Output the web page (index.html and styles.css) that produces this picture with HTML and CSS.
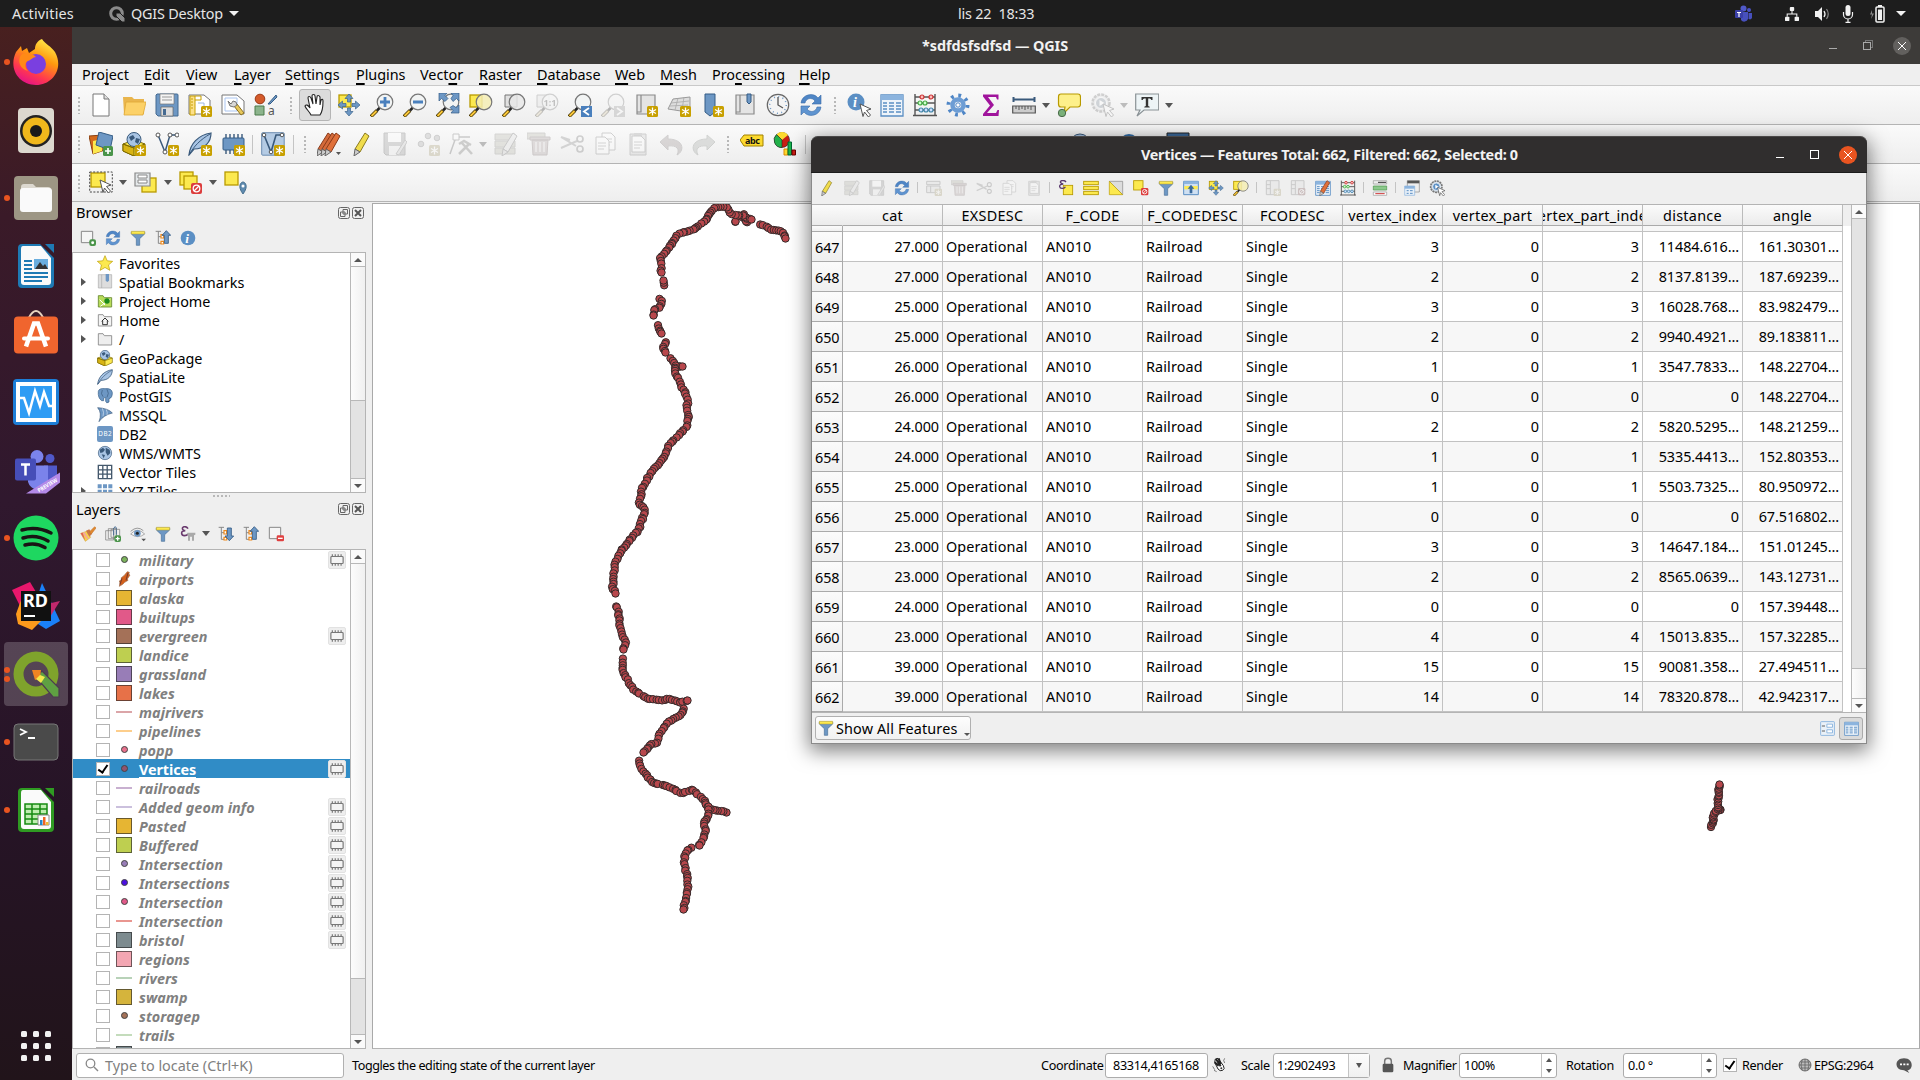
FILE: index.html
```html
<!DOCTYPE html>
<html lang="en">
<head>
<meta charset="utf-8">
<title>QGIS Desktop</title>
<link rel="stylesheet" href="styles.css">
</head>
<body>
<div class="desktop">
  <header class="topbar">
    <span class="activities">Activities</span>
    <svg class="q-mini" viewBox="0 0 16 16"><circle cx="7.5" cy="7.5" r="5.8" fill="none" stroke="#8b8b8b" stroke-width="3"/><path d="M7 7h4l5 5v4h-3L7 10z" fill="#8b8b8b" stroke="#1d1d1d"/></svg>
    <span class="appname">QGIS Desktop</span><i class="tri light"></i>
    <span class="clock">lis 22&nbsp; 18:33</span>
    <div class="tray">
      <svg class="t-teams" viewBox="0 0 18 18"><circle cx="9.500" cy="3.500" r="3" fill="#5059c9"/><circle cx="15" cy="5" r="2" fill="#4a52c4"/><path d="M7 7h7v7a4 4 0 0 1-7 1zM14.500 8H18v5a2.500 2.500 0 0 1-3.500 1z" fill="#4750bd"/><rect x="1" y="5" width="8" height="8" rx="1" fill="#3a3fa6"/><path d="M3 7.500h4M5 7.500V12" stroke="#fff" stroke-width="1.200"/></svg>
      <svg class="t-net" viewBox="0 0 16 16" fill="#f2f2f2"><rect x="5.500" y="0" width="5" height="4.500" rx="1"/><rect x="0" y="11" width="5" height="5" rx="1"/><rect x="11" y="11" width="5" height="5" rx="1"/><path d="M8 4v4M2.500 11V8h11v3" stroke="#f2f2f2" stroke-width="1.200" fill="none"/></svg>
      <svg class="t-vol" viewBox="0 0 16 16" fill="#f2f2f2"><path d="M1 5h3l4-4v14l-4-4H1z"/><path d="M10 5q2 3 0 6" stroke="#f2f2f2" fill="none" stroke-width="1.300"/><path d="M12.500 3q3.500 5 0 10" stroke="#888" fill="none" stroke-width="1.200"/></svg>
      <svg class="t-mic" viewBox="0 0 12 18" fill="#f2f2f2"><rect x="3.500" y="0" width="5" height="11" rx="2.500"/><path d="M1.500 7v2.500a4.500 4.500 0 0 0 9 0V7M6 14v3M3.500 17.300h5" fill="none" stroke="#f2f2f2" stroke-width="1.200"/></svg>
      <svg class="t-bat" viewBox="0 0 16 18"><path d="M3 5L1 9.500h2L2 14l3-5.500H3z" fill="#888"/><rect x="7" y="2" width="8" height="15" rx="1" fill="none" stroke="#f2f2f2" stroke-width="1.500"/><rect x="9" y="0" width="4" height="2" fill="#f2f2f2"/><rect x="9" y="4.500" width="4" height="10.500" fill="#f2f2f2"/></svg>
      <i class="tri light"></i>
    </div>
  </header>
  <div class="below">
    <nav class="dock" id="dock"></nav>
    <main class="app">
      <div class="titlebar"><span>*sdfdsfsdfsd — QGIS</span>
        <div class="wm dim"><i class="min"></i><i class="restore"></i><i class="close"></i></div>
      </div>
      <div class="menubar">
        <span class="m1">Pro<u>j</u>ect</span><span class="m2"><u>E</u>dit</span><span class="m3"><u>V</u>iew</span><span class="m4"><u>L</u>ayer</span><span class="m5"><u>S</u>ettings</span><span class="m6"><u>P</u>lugins</span><span class="m7">Vect<u>o</u>r</span><span class="m8"><u>R</u>aster</span><span class="m9"><u>D</u>atabase</span><span class="m10"><u>W</u>eb</span><span class="m11"><u>M</u>esh</span><span class="m12">Pro<u>c</u>essing</span><span><u>H</u>elp</span>
      </div>
      <div class="toolbar" data-items="| new open save layout layoutmgr style |w hand* panSel zoomIn zoomOut zoomFull zoomSel zoomLayer zoomNative~ zoomLast zoomNext~ newMap newMesh newBm showBm clock refresh |g info attr abacus gear sigma ruler v tip action~ v~ textNote v"></div>
      <div class="toolbar" data-items="| addLayer geopkg vlayer feather chip s shape S |h pencils pencil saveEdit~ addPt~ vertex~ v~ multi~ trash~ cut~ copy~ paste~ undo~ redo~ |g label diagram S gap globe gapS blueDot gapS dbDark"></div>
      <div class="toolbar last" data-items="| selRect v selForm v deselect v selLoc"></div>
      <div class="work">
        <aside class="panels">
          <div class="ptitle"><span>Browser</span><i class="pbtn" data-icon="float"></i><i class="pbtn" data-icon="pclose"></i></div>
          <div class="ptools" data-items="addBox refresh filter collapse infoS"></div>
          <div class="listbox browser"><div class="rows" id="browser"></div>
            <div class="sb"><b class="up"></b><div class="handle"></div><b class="dn"></b></div></div>
          <div class="split"></div>
          <div class="ptitle second"><span>Layers</span><i class="pbtn" data-icon="float"></i><i class="pbtn" data-icon="pclose"></i></div>
          <div class="ptools lower" data-items="brush addGroup eye filter epsilon v expand collapse removeBox"></div>
          <div class="listbox layers"><div class="rows" id="layers"></div>
            <div class="sb"><b class="up"></b><div class="handle"></div><b class="dn"></b></div></div>
        </aside>
        <div class="vsplit"></div>
        <section class="canvas"><svg id="map" viewBox="373 204 1546 844"></svg></section>
      </div>
      <footer class="status">
        <div class="locate"><svg viewBox="0 0 14 14"><circle cx="5.500" cy="5.500" r="4.300" fill="none" stroke="#888" stroke-width="1.300"/><path d="M9 9l4 4" stroke="#888" stroke-width="1.500"/></svg><span>Type to locate (Ctrl+K)</span></div>
        <span class="msg">Toggles the editing state of the current layer</span>
        <span class="l-co">Coordinate</span><div class="field f-co"><span>83314,4165168</span></div>
        <i class="ic16 mouse" data-icon="mouse"></i>
        <span class="l-sc">Scale</span><div class="field f-sc"><span>1:2902493</span><div class="drop"><i class="tri sm"></i></div></div>
        <i class="ic16 lock" data-icon="lock"></i>
        <span class="l-mg">Magnifier</span><div class="field f-mg"><span>100%</span><div class="spin"><b></b><i></i></div></div>
        <span class="l-ro">Rotation</span><div class="field f-ro"><span>0.0 °</span><div class="spin"><b></b><i></i></div></div>
        <i class="check on st"></i><span class="l-re">Render</span>
        <i class="ic16 crs" data-icon="crs"></i><span class="l-ep">EPSG:2964</span>
        <i class="ic16 bubble" data-icon="bubble"></i>
      </footer>
    </main>
  </div>
  <section class="window">
    <div class="wtitle"><span>Vertices — Features Total: 662, Filtered: 662, Selected: 0</span>
      <div class="wm"><i class="min"></i><i class="max"></i><i class="close"></i></div></div>
    <div class="wtools" data-items="pencil multi~ saveEdit~ refresh s addRow~ trash~ cut~ copy~ paste~ s selExpr selAll invert deselOne filter moveTop panSel zoomSel s newField~ delField~ editField abacus s cond s dock action"></div>
    <div class="tablewrap"><div class="table" id="table"></div>
      <div class="sb"><b class="up"></b><div class="trough"></div><div class="handle"></div><b class="dn"></b></div></div>
    <div class="wfoot"><div class="showall"><i data-icon="filter"></i><span>Show All Features</span><em></em></div>
      <i class="fbtn" data-icon="formView"></i><i class="fbtn active" data-icon="attr"></i></div>
  </section>
</div>
<script src="app.js"></script>
</body>
</html>
```
FILE: styles.css
```css
*{box-sizing:border-box}
body{margin:0;width:1920px;height:1080px;overflow:hidden;font:14.4px/19px "Noto Sans","Open Sans",sans-serif;color:#000}
i,em,b{font-style:normal;font-weight:400}
svg{display:block}
.desktop{position:relative;width:1920px;height:1080px;display:flex;flex-direction:column;overflow:hidden}
.topbar{height:27px;background:#1d1d1d;color:#e6e6e6;display:flex;align-items:center;flex:none}
.activities{margin-left:12px;width:97px;letter-spacing:.2px}
.q-mini{width:16px;height:16px;margin-right:6px}
.appname{width:92px;letter-spacing:-.2px;white-space:nowrap}
.tri{width:0;height:0;border:4px solid transparent;border-top:5px solid #555;border-bottom:0;flex:none}
.tri.light{border-width:5px;border-top-color:#f2f2f2;border-bottom:0;margin-left:6px}
.tri.sm{border-width:3.5px;border-top-width:5px;border-bottom:0}
.clock{margin-left:719px;width:90px;white-space:nowrap;letter-spacing:-.2px}
.tray{display:flex;align-items:center;margin-left:686px}
.t-teams{width:18px;height:18px;margin-right:32px}
.t-net{width:16px;height:14px;margin-right:14px}
.t-vol{width:16px;height:16px;margin-right:12px}
.t-mic{width:12px;height:18px;margin-right:15px}
.t-bat{width:16px;height:18px;margin-right:5px}
.below{flex:1;display:flex;min-height:0}
.dock{width:72px;background:linear-gradient(#48201f 0,#3a1a28 18%,#30182e 45%,#261426 75%,#21141a 100%);display:flex;flex-direction:column;padding-top:1px}
.dock .cell{height:68px;display:flex;align-items:center;justify-content:center;position:relative;flex:none}
.dock .cell.active:before{content:"";position:absolute;inset:2px 4px;background:rgba(255,255,255,.2);border-radius:4px}
.dock svg{width:48px;height:48px;position:relative}
.dock .dots{position:absolute;left:4px;top:0;height:68px;display:flex;flex-direction:column;justify-content:center;gap:3px}
.dock .dots b{width:6px;height:6px;border-radius:50%;background:#e95420}
.dock .apps{margin-top:auto;height:68px;display:flex;align-items:center;justify-content:center}
.dock .apps svg{width:30px;height:30px}
.app{flex:1;display:flex;flex-direction:column;background:#efefef;min-width:0}
.titlebar{height:37px;background:#3d3b39;color:#f2f2f2;font-weight:700;display:flex;align-items:center;flex:none}
.titlebar span{margin-left:850px;width:160px;white-space:nowrap;letter-spacing:-.05px}
.wm{margin-left:auto;display:flex;align-items:center;color:#fff}
.wm i{display:block;width:9px;height:9px;flex:none}
.wm .min{height:1px;background:currentColor;width:8px;margin:6px 26px 0 0}
.wm .max{border:1px solid currentColor;width:9px;height:9px;margin-right:20px}
.wm .restore{width:8px;height:8px;border:1px solid currentColor;box-shadow:2px -2px 0 -1px #3d3b39,2px -2px 0 0 #777;margin-right:22px}
.wm .close{width:18px;height:18px;border-radius:50%;background:linear-gradient(45deg,transparent 44%,#fff 44% 56%,transparent 56%) center/8px 8px no-repeat,linear-gradient(-45deg,transparent 44%,#fff 44% 56%,transparent 56%) center/8px 8px no-repeat,#e95420}
.wm.dim{color:#aaa;margin-right:9px}
.wm.dim .close{background-color:#62605e}
.menubar{height:22px;flex:none;display:flex;padding-left:10px;line-height:21px;border-bottom:1px solid #c9c9c9;white-space:nowrap;letter-spacing:-.03px}
u{text-underline-offset:3px;text-decoration-thickness:1.5px}
.m1{width:62px}.m2{width:42px}.m3{width:48px}.m4{width:51px}.m5{width:71px}.m6{width:64px}.m7{width:59px}.m8{width:58px}.m9{width:78px}.m10{width:45px}.m11{width:52px}.m12{width:87px}
.toolbar{height:39px;flex:none;display:flex;align-items:center;background:linear-gradient(#fafafa,#eee);border-bottom:1px solid #b4b4b4;overflow:hidden}
.toolbar.last{height:38px}
.tb{width:33px;height:32px;flex:none;display:flex;align-items:center;justify-content:center}
.tb svg{width:24px;height:24px}
.tb.on{background:#dcdcdc;border:1px solid #b5b5b5;border-radius:3px;width:32px;margin-right:1px}
.dis{opacity:.3;filter:grayscale(.75)}
.grip{width:5px;height:18px;flex:none;background:radial-gradient(circle,#b8b8b8 .8px,transparent 1px) 0 0/4px 4px}
.grip.first{margin:0 2px 0 5px}
.grip.wide{margin:0 5px 0 7px}
.grip.mid{margin:0 4px 0 6px}
.grip.tight{margin:0 4px 0 5px}
.arr{width:12px;flex:none;display:flex;justify-content:center}
.arr.dis{opacity:.35}
.sep{width:1px;height:19px;background:#c4c4c4;margin:0 3px;flex:none}
.sep.wide{margin:0 4px}
.gap{width:253px;flex:none}.gapS{width:16px;flex:none}
.work{flex:1;display:flex;min-height:0}
.panels{width:295px;display:flex;flex-direction:column;flex:none}
.ptitle{display:flex;height:21px;align-items:center;padding:0 3px 0 4px;font-size:14.6px;flex:none}
.ptitle span{flex:1}
.pbtn{width:12px;height:12px;margin-left:2px}
.pbtn svg{width:12px;height:12px}
.ptools{height:29px;display:flex;align-items:center;padding-left:3px;flex:none}
.ptools .tb{width:25px;height:24px}
.ptools .tb svg{width:16px;height:16px}
.ptools .arr{width:12px;margin-right:1px}
.ptools.lower{margin-bottom:1px}
.listbox{border:1px solid #b4b4b4;background:#fff;display:flex;flex:none;overflow:hidden;margin-right:1px}
.browser{height:241px}
.layers{flex:1}
.rows{flex:1;overflow:hidden}
.sb{width:15px;border-left:1px solid #b8b8b8;background:#e3e3e3;display:flex;flex-direction:column;flex:none}
.sb b{height:14px;flex:none;background:#fafafa;display:flex;align-items:center;justify-content:center}
.sb b:after{content:"";border:4px solid transparent;border-bottom:4px solid #555;border-top:0;margin-right:1px}
.sb b.dn:after{border-top:4px solid #555;border-bottom:0}
.sb b.up{border-bottom:1px solid #b8b8b8}.sb b.dn{border-top:1px solid #b8b8b8;margin-top:auto}
.handle{background:linear-gradient(90deg,#fcfcfc,#f0f0f0);border-bottom:1px solid #b8b8b8}
.browser .handle{height:134px}.layers .handle{height:415px}
.split{height:5px;flex:none;background:radial-gradient(circle,#b8b8b8 .8px,transparent 1px) 140px 1px/4px 4px repeat-x;width:158px;border-left:140px solid #efefef;background-origin:border-box}
.second{padding-top:1px}
.vsplit{width:5px;flex:none}
.canvas{flex:1;border:1px solid #a9a9a9;border-bottom-color:#b4b4b4;background:#fff;margin-top:1px;overflow:hidden}
.canvas svg{width:1546px;height:844px}
.brow{height:19px;display:flex;align-items:center;padding-left:8px}
.brow .ex{width:0;border:4px solid transparent;border-left:5px solid #555;border-right:0;margin-right:11px}
.brow .ex.no{visibility:hidden}
.brow svg{width:16px;height:16px;margin-right:6px}
.brow span{letter-spacing:-.03px;white-space:nowrap;padding-top:1px}
.lrow{height:19px;display:flex;align-items:center;padding:0 4px 0 23px;color:#808080;font-weight:700;font-style:italic;white-space:nowrap}
.lrow span{flex:1;letter-spacing:.05px;padding-top:1px}
.lrow.sel{background:#308cc6;color:#fff;font-style:normal}
.lrow.sel span{letter-spacing:-.1px}
.lrow.sel u{display:inline-block;height:18px;line-height:19px;border-bottom:1px solid #fff;text-decoration:none;vertical-align:top}
.check{width:14px;height:14px;border:1px solid #b4b4b4;background:#fff;margin-right:6px;flex:none}
.check.on{display:flex;align-items:center;justify-content:center}
.check.on:after{content:"";width:4px;height:8px;border:solid #000;border-width:0 2px 2px 0;transform:translateY(-1px) rotate(35deg)}
.sym{width:16px;height:16px;margin-right:7px;flex:none;display:flex;align-items:center;justify-content:center}
.sym.fill{border:1px solid rgba(40,40,40,.65)}
.sym b{display:block}
.sym.pt b{width:7px;height:7px;border-radius:50%;border:1px solid #444}
.sym.ln b{width:16px;height:2px}
.sym svg{width:16px;height:16px}
.mem{width:18px;height:18px;background:#eee;border:1px solid #e2e2e2;border-radius:2px;display:flex;align-items:center;justify-content:center}
.mem svg{width:14px;height:14px}
.status{height:31px;flex:none;display:flex;align-items:center;font-size:12.6px;white-space:nowrap;letter-spacing:-.3px;padding-top:1px}
.locate{width:268px;height:25px;margin-left:4px;border:1px solid #b0b0b0;border-radius:3px;background:#fff;display:flex;align-items:center;color:#808080;font-size:14.4px;letter-spacing:0;flex:none}
.locate svg{width:14px;height:14px;margin:0 6px 0 8px}
.status>span,.status>i,.status>div{flex:none}
.msg{margin-left:8px;width:689px;letter-spacing:-.43px}
.l-co{width:64px}
.field{height:25px;border:1px solid #acacac;border-radius:3px;background:#fff;display:flex;align-items:center}
.field span{flex:1;padding-left:4px}
.f-co{width:103px}.f-co span{padding-left:7px}
.ic16{width:16px;height:16px}.ic16 svg{width:16px;height:16px}
.mouse{margin-left:4px}
.l-sc{margin-left:13px;width:32px}
.f-sc{width:97px}
.f-sc span{padding-left:3px}
.drop{width:21px;align-self:stretch;border-left:1px solid #c4c4c4;display:flex;align-items:center;justify-content:center;background:linear-gradient(#fcfcfc,#f0f0f0)}
.lock{margin-left:10px}
.l-mg{margin-left:7px;width:56px;letter-spacing:-.4px}
.f-mg{width:98px}
.spin{width:15px;align-self:stretch;border-left:1px solid #c4c4c4;display:flex;flex-direction:column;align-items:center;justify-content:center;gap:7px}
.spin b{border:3.5px solid transparent;border-bottom:4px solid #555;border-top:0}
.spin i{border:3.5px solid transparent;border-top:4px solid #555;border-bottom:0}
.l-ro{margin-left:9px;width:57px}
.f-ro{width:94px}
.check.st{margin:0 5px 0 6px}
.l-re{width:55px}
.crs{margin-right:1px}
.l-ep{width:82px;letter-spacing:-.4px}
.window{position:absolute;left:811px;top:136px;width:1056px;height:608px;background:#efefef;border:1px solid #8a8a8a;border-top:0;border-radius:7px 7px 0 0;box-shadow:0 5px 20px 2px rgba(0,0,0,.5);display:flex;flex-direction:column}
.wtitle{height:37px;margin:0 -1px;background:#302e2e;color:#f2f2f2;border-radius:7px 7px 0 0;border-top:1px solid #4a4848;border-bottom:1px solid #1c1c1c;display:flex;align-items:center;font-weight:700;flex:none}
.wtitle span{margin-left:330px;white-space:nowrap;letter-spacing:-.3px}
.wtitle .wm{margin-right:10px}
.wtools{height:31px;display:flex;align-items:center;padding:0 0 2px 2px;flex:none}
.wtools .tb{width:25px;height:24px}
.wtools .tb svg{width:16px;height:16px}
.wtools .sep{height:11px}
.tablewrap{height:509px;display:flex;flex:none;border-top:1px solid #b4b4b4;border-bottom:1px solid #b4b4b4}
.table{width:1039px;background:#fff;flex:none;overflow:hidden}
.tr{display:grid;grid-template-columns:31px repeat(10,100px);height:30px;width:1031px;white-space:nowrap}
.tr div{border-right:1px solid #c2c2c2;border-bottom:1px solid #c2c2c2;padding:0 3px;line-height:29px;overflow:hidden;letter-spacing:.12px}
.tr .h{background:linear-gradient(#fbfbfb,#efefef);border-color:#aaa;padding:1px 0 0 3px;letter-spacing:-.1px}
.tr .r{text-align:right;letter-spacing:-.08px}
.tr.alt div:not(.h){background:#f7f7f7}
.tr.head{height:21px;width:1039px;background:#efefef}
.tr.head div{background:linear-gradient(#fbfbfb,#ebebeb);line-height:22px;border-color:#bbb;border-bottom-color:#aaa;padding:0;display:flex;justify-content:center;letter-spacing:.28px}
.tr.head div:first-child{border-right-color:transparent}
.tr.part{height:6px}
.trough{height:450px;border-bottom:1px solid #b8b8b8}
.tablewrap .handle{flex:1;border:0}
.wfoot{flex:1;display:flex;align-items:center;padding:0 3px}
.showall{width:156px;height:24px;border:1px solid #b0b0b0;border-radius:3px;background:linear-gradient(#fdfdfd,#f1f1f1);display:flex;align-items:center;padding-left:2px;margin-right:auto}
.showall svg{width:16px;height:16px}
.showall span{margin-left:2px;width:128px;white-space:nowrap;letter-spacing:.14px}
.showall em{border:3px solid transparent;border-top:3px solid #555;border-bottom:0;margin-top:12px}
.fbtn{width:24px;height:23px;display:flex;align-items:center;justify-content:center;border-radius:3px}
.fbtn svg{width:15px;height:15px}
.fbtn.active{background:#dadada;border:1px solid #aaa}
```
FILE: app.js
```js
const star = (x = 13, y = 13) => `<g transform="translate(${x} ${y})"><rect width="11" height="11" rx="1.500" fill="#c8a000"/><path d="M5.500 1.500v8M2 3.500l7 4M9 3.500l-7 4" stroke="#fff" stroke-width="1.300"/></g>`;
const lens = (sym = '', fill = '#f1f3f3') => `<path d="M1 23.500l6-6" stroke="#4a3800" stroke-width="3.500"/><path d="M1.500 23l5-5" stroke="#f9c73a" stroke-width="2"/><path d="M7 17.500l3-3" stroke="#222" stroke-width="2.500"/><circle cx="15" cy="9" r="7.800" fill="${fill}" fill-opacity=".85" stroke="#777" stroke-width="1.200"/>${sym}`;
const cursor = '<path d="M13 11l11 5-4.500 1.500 4 4.500-2 2-4-5-1.500 4.500z" fill="#fff" stroke="#555"/>';
const book = '<path d="M3 2h4v17H3zM7 2h14v19H3v-2" fill="#e4e4e4" stroke="#8a8a8a" stroke-width="1.200"/>';
const four = c => `<path d="M12 1l4 4.500h-2.500V9h-3V5.500H8zM12 23l4-4.500h-2.500V15h-3v3.500H8zM1 12l4.500-4v2.500H9v3H5.500V16zM23 12l-4.500-4v2.500H15v3h3.500V16z" fill="${c}" stroke="#3c648c" stroke-width=".7"/>`;
const fun = '<path d="M2 3h20v3l-7.500 7v10h-5V13L2 6z" fill="#6d97c4" stroke="#4a7199"/><path d="M2 2h20v4H2z" fill="#fce94f" stroke="#b8a030" stroke-width=".8"/>';
const globe = '<circle cx="12" cy="12" r="10" fill="#a8c4e4" stroke="#39597b"/><path d="M4 7l5-3 3 3-3 4-4 1zM13 4l6 3 1 5-4 4-3-5zM7 14l5 1-2 5z" fill="#39597b"/>';
const quill = '<path d="M1 23C2 12 10 3 23 1c0 9-6 16-17 16z" fill="#a8c4e4" stroke="#39597b" stroke-width="1.200"/><path d="M1 23C6 14 12 8 22 2" fill="none" stroke="#39597b"/>';
const cube = '<path d="M12 8l11 4v7l-11 5L1 19v-7z" fill="#fce94f" stroke="#7d6a00"/><path d="M1 12l11 4v8L1 19z" fill="#d8b414" stroke="#7d6a00"/><circle cx="12" cy="7.500" r="7" fill="#a8c4e4" stroke="#39597b"/><path d="M7 5l4-2 2 3-4 3zM14 6l4 1-2 5-3-2z" fill="#39597b"/><path d="M1 12l11 4 11-4" stroke="#7d6a00" fill="none"/>';
const sheet = (x, y) => `<path d="M${x} ${y}h9l4 4v13H${x}z" fill="#fff" stroke="#777"/><path d="M${x + 2} ${y + 6}h8m-8 3h8m-8 3h6" stroke="#888"/>`;
const tree = up => `<path d="M1 2h8M5 2v18h5M5 10h4" fill="none" stroke="#888" stroke-width="1.500"/><path d="M9 7h4v5H9zM9 17h4v4H9z" fill="#fff" stroke="#f08a1c" stroke-width="1.800"/>` +
  (up ? '<path d="M17 1l6.500 7H20v12h-6V8h-3.500z" fill="#6d97c4" stroke="#355d86" stroke-width="1.300"/>' : '<path d="M17 22l6.500-7H20V3h-6v12h-3.500z" fill="#6d97c4" stroke="#355d86" stroke-width="1.300"/>');
const pen = (dx, c, d) => `<g transform="translate(${dx} 0)"><path d="M4 17L14 1l4 3L9 20z" fill="${c}" stroke="${d}"/><path d="M4 17l5 3-6 4z" fill="#ccc" stroke="#666"/></g>`;
const grid = '<path d="M1 2h22v21H1z" fill="#eef4fa" stroke="#5b8fc4" stroke-width="1.300"/><path d="M1 2h22v5H1z" fill="#8cb4de"/><path d="M3 10h4m2 0h5m2 0h5M3 13h4m2 0h5m2 0h5M3 16h4m2 0h5m2 0h5M3 19h4m2 0h5m2 0h5" stroke="#5b8fc4" stroke-width="1.500"/>';
const ys = (x, y, w, h = w) => `<rect x="${x}" y="${y}" width="${w}" height="${h}" fill="#fce94f" stroke="#b89a00" stroke-width="1.300"/>`;
const no = (x, y) => `<rect x="${x}" y="${y}" width="11" height="11" rx="2" fill="#dc3c3c"/><circle cx="${x + 5.5}" cy="${y + 5.5}" r="3.300" fill="none" stroke="#fff" stroke-width="1.300"/><path d="M${x + 3} ${y + 8}l5-5" stroke="#fff" stroke-width="1.300"/>`;
const folder = (f, s) => `<path d="M2 4h7l2 3h11v14H2z" fill="${f}" stroke="${s}" stroke-width="1.300"/>`;

const icons = {
  new: '<path d="M4 1h11l5 5v17H4z" fill="#fff" stroke="#777"/><path d="M15 1v5h5" fill="#ddd" stroke="#777"/>',
  open: '<path d="M1 4h9l2 2h10v15H2z" fill="#e9b54d"/><path d="M4 9h20l-3 13H2z" fill="#fcd168" stroke="#e0a836" stroke-width=".8"/>',
  save: '<path d="M2 1h20a1 1 0 0 1 1 1v21H3l-2-2V2z" fill="#6d97c4" stroke="#456a91"/><path d="M5 1h14v10H5z" fill="#f4f4f4" stroke="#777" stroke-width=".7"/><path d="M7 4h10M7 7h10" stroke="#999"/><path d="M6 14h12v9H6z" fill="#ddd" stroke="#666" stroke-width=".7"/><path d="M8 16h3v6H8z" fill="#456a91"/>',
  layout: '<path d="M1 2h15l6 5v14H1z" fill="#fff" stroke="#777"/><path d="M2 3h5v19H2z" fill="#fce08a" stroke="#c8a000"/><path d="M3 6h2m-2 3h2m-2 3h2m-2 3h2M7 3h6v4H7" stroke="#c8a000" fill="none"/><path d="M10 10h6v8" fill="none" stroke="#9db8e0"/>' + star(),
  layoutmgr: '<path d="M1 2h15l7 6v13H1z" fill="#fff" stroke="#777"/><path d="M4 5h12v13H4z" fill="none" stroke="#a9c4ef"/><path d="M13 13l7 9 3-2-7-9z" fill="#e8c85a" stroke="#8a7020"/><path d="M7 8l3 3 2-3 3 1 1 3-3 2-4-1z" fill="#d8d8d8" stroke="#777"/>',
  style: '<circle cx="6" cy="6" r="4.800" fill="#d45a2a" stroke="#9a3a18"/><path d="M14 11l8-9 1 2-7 7z" fill="#6d97c4" stroke="#355d86"/><path d="M1 13h9v9H1z" fill="#8cb48c" stroke="#4a7a4a"/><text x="14" y="22" font-size="12" fill="#555">a</text>',
  hand: '<path d="M8 22c-2-4-5-6-6-9 1-2 3-1 5 2L5 5c0-2 2-2 3 0l2 6-1-8c0-2 3-2 3 0l1 8 1-7c0-2 2-2 3 0v8l1-5c1-1 2-1 2 1 0 5 0 10-3 14z" fill="#fff" stroke="#222" stroke-width="1.100"/>',
  panSel: ys(2, 2, 12) + four('#6d97c4'),
  zoomIn: lens('<path d="M10 9h10M15 4v10" stroke="#4a80bd" stroke-width="2.800"/>'),
  zoomOut: lens('<path d="M10 9h10" stroke="#4a80bd" stroke-width="3"/>'),
  zoomFull: lens() + '<path d="M3 0h8L9 2.500l3 3-3 3-3.500-3L3 8zM23 0h-8l2 2.500-2 3 2 3 3.500-3L23 8zM23 20v-8l-3 2.500-3-2-3 2 3 3-2 2.500z" fill="#6d97c4" stroke="#355d86" stroke-width=".7"/>',
  zoomSel: ys(1, 2, 12) + lens('', '#f5edb4'),
  zoomLayer: '<path d="M3 2h12v12H3z" fill="#e0e0e0" stroke="#777"/>' + lens('', '#e8e8e8'),
  zoomNative: '<path d="M2 2h12v12H2z" fill="#e0e0e0" stroke="#777"/>' + lens('<text x="8.500" y="12.500" font-size="9" font-weight="bold" fill="#444" textLength="13">1:1</text>'),
  zoomLast: lens() + '<path d="M13 13h11v11H13z" fill="#4a80bd"/><path d="M21 15l-5 3.500 5 3.500" fill="none" stroke="#fff" stroke-width="1.800"/>',
  zoomNext: lens() + '<path d="M13 13h11v11H13z" fill="#999"/><path d="M16 15l5 3.500-5 3.500" fill="none" stroke="#fff" stroke-width="1.800"/>',
  newMap: book + star(), newMesh: '<path d="M1 16L6 6l17-2v11l-9 3z" fill="#ddd" stroke="#999"/><path d="M4 10l18-2M3 13l18-1M11 5l-3 12M17 4l-2 13" stroke="#aaa" stroke-width=".8" fill="none"/>' + star(),
  newBm: '<path d="M5 1h10v18l-5 4-5-4z" fill="#6d97c4" stroke="#355d86"/>' + star(13, 13),
  showBm: book + '<path d="M14 1h4v8l-2 2-2-2z" fill="#6d97c4" stroke="#355d86"/>',
  clock: '<circle cx="12" cy="12" r="10.700" fill="#f4f4f4" stroke="#666" stroke-width="1.200"/><circle cx="12" cy="12" r="8.300" fill="none" stroke="#6d97c4" stroke-width="1.500" stroke-dasharray="1 3.350"/><path d="M12 4v8l5 3" fill="none" stroke="#555" stroke-width="1.300"/>',
  refresh: '<path d="M2 10C3 1 15-1 19 5l3-3v9h-9l3-3C13 4 7 5 6 10z" fill="#4f86c6" stroke="#3d6da8" stroke-width=".6"/><path d="M22 14c-1 9-13 11-17 5l-3 3v-9h9l-3 3c3 4 9 3 10-2z" fill="#5f94d0" stroke="#3d6da8" stroke-width=".6"/>',
  info: '<circle cx="9" cy="9" r="8.500" fill="#5b8fc4"/><text x="6" y="14" font-size="14" font-style="italic" font-weight="bold" font-family="Liberation Serif" fill="#fff">i</text>' + cursor,
  infoS: '<circle cx="12" cy="12" r="11" fill="#5b8fc4"/><text x="8" y="19" font-size="20" font-style="italic" font-weight="bold" font-family="Liberation Serif" fill="#fff">i</text>',
  attr: grid,
  abacus: '<path d="M2 1v22M22 1v22M0 22.500h24M2 4h20M2 10h20M2 17h20" stroke="#555" stroke-width="1.400" fill="none"/><g stroke-width="1.200"><g fill="#fbb" stroke="#c33"><circle cx="9" cy="4" r="2"/><circle cx="18" cy="4" r="2"/></g><g fill="#cfc" stroke="#4a4"><circle cx="7" cy="10" r="2"/><circle cx="12" cy="10" r="2"/></g><g fill="#cdf" stroke="#48a"><circle cx="8" cy="17" r="2"/><circle cx="13" cy="17" r="2"/><circle cx="18" cy="17" r="2"/></g></g>',
  gear: '<circle cx="12" cy="12" r="9.500" fill="none" stroke="#4f86c6" stroke-width="4" stroke-dasharray="2.800 4.660"/><circle cx="12" cy="12" r="5.500" fill="#f4f4f4" stroke="#6d9dd4" stroke-width="4.500"/><circle cx="12" cy="12" r="2.200" fill="#fff" stroke="#4f86c6"/>',
  sigma: '<path d="M4 1.500h15.500v5h-1.500L17 4h-8l6 8-7 8h9l1.500-3H20l-.5 6H4v-2l7-8.500L4 3.500z" fill="#a0149c"/>',
  ruler: '<path d="M1 6.500h22M1.500 4v5M22.500 4v5" stroke="#39597b" stroke-width="2"/><path d="M.7 13h22.600v7H.7z" fill="#ccc" stroke="#555" stroke-width="1.200"/><path d="M4 13v3m3-3v4m3-4v3m3-3v4m3-4v3m3-3v4" stroke="#555"/>',
  tip: '<path d="M4 1h17q2.500 0 2.500 3v7q0 3-2.500 3h-8l-6 6 1-6H4q-2.500 0-2.500-3V4q0-3 2.500-3z" fill="#fdf08a" stroke="#b89a00" stroke-width="1.200"/><circle cx="5" cy="20" r="3.700" fill="#7ab07a" stroke="#4a6a4a"/>',
  action: '<circle cx="11" cy="10" r="8.500" fill="#d4dde6" stroke="#777" stroke-width="2.500" stroke-dasharray="3 1"/><circle cx="11" cy="10" r="5.500" fill="#5b8fc4" stroke="#fff"/><path d="M9.500 7l5 3-5 3z" fill="#fff"/>' + cursor,
  textNote: '<path d="M.7 1h23v16H9l-7 6 3-6H.7z" fill="#edf4f6" stroke="#8a9296" stroke-width="1.200"/><path d="M6.500 4h11v3h-1.200q-.3-1.600-1.500-1.600h-1.600V13l1.500.7v.8H9.300v-.8l1.500-.7V5.400H9.200Q8 5.400 7.700 7H6.500z" fill="#333"/>',
  addLayer: '<path d="M0 4l14-1 2 15-12 4z" fill="#d46a1c" stroke="#8a4010"/><path d="M4 9l9-2v12l-9 3z" fill="#fce94f"/><path d="M10 0l14 4-3 14-14-5z" fill="#6d97c4" stroke="#355d86"/><rect x="14" y="14" width="10" height="10" rx="1.500" fill="#4a944a"/><path d="M19 16v6m-3-3h6" stroke="#fff" stroke-width="1.700"/>',
  geopkg: cube + star(), geo: cube, vlayer: '<path d="M3 3l7 17 5-17h7" fill="none" stroke="#39597b" stroke-width="1.500"/><g fill="#fff" stroke="#555"><circle cx="3" cy="3" r="2"/><circle cx="10" cy="20" r="2"/><circle cx="15" cy="3" r="2"/><circle cx="22" cy="3" r="2"/></g>' + star(),
  feather: quill + star(), quill,
  chip: '<path d="M5 2v20M9 2v20M13 2v20M17 2v20M21 2v20" stroke="#39597b" stroke-width="1.400"/><rect x="2" y="6" width="21" height="12" rx="1" fill="#6d97c4" stroke="#355d86"/>' + star(),
  shape: '<rect x=".7" y=".7" width="22.500" height="22.500" rx="1" fill="#b4cbe4" stroke="#6a8cb0"/><path d="M3 3l7 17 5-17h7" fill="none" stroke="#39597b" stroke-width="1.600"/><g fill="#fff" stroke="#555"><circle cx="3" cy="3" r="1.800"/><circle cx="10" cy="20" r="1.800"/><circle cx="21" cy="3" r="1.800"/></g>' + star(),
  pencils: pen(-3, '#d46a3a', '#8a3a1a') + pen(1, '#d46a3a', '#8a3a1a') + pen(5, '#e0703a', '#8a3a1a') + '<path d="M19 20h5l-2.500 3z" fill="#555"/>',
  pencil: pen(1, '#f0dc4c', '#8a7a20'),
  saveEdit: '<path d="M1 1h21v22H3l-2-2z" fill="#999" stroke="#666"/><path d="M5 1h13v9H5z" fill="#fff"/><path d="M6 14h11v9H6z" fill="#eee"/>' + '<path d="M13 22l9-14 2 2-8 13z" fill="#ccc" stroke="#777"/>',
  addPt: '<g fill="#aaa" stroke="#777"><circle cx="5" cy="12" r="2.800"/><circle cx="12" cy="4" r="2.800"/><circle cx="21" cy="6" r="2.800"/></g>' + star(),
  vertex: '<path d="M1 22L7 5h14" fill="none" stroke="#666" stroke-width="1.500"/><path d="M4 2h6v6H4z" fill="#fff" stroke="#666"/><path d="M10 22l10-10M13 11l10 11M10 12l5-3 7 4" stroke="#776" stroke-width="2.500" fill="none"/>',
  multi: '<path d="M1 2h20v6H1zM1 9h20v6H1zM1 16h20v6H1z" fill="#bbb98a" stroke="#887"/>' + pen(5, '#ddd', '#666'),
  trash: '<path d="M0 1h18v6H0z" fill="#bbb98a" stroke="#887"/><path d="M5 8h16l-1 15H6zM3 5h20v3H3z" fill="#c89898" stroke="#966"/><path d="M9 10v10m4-10v10m4-10v10" stroke="#fff"/>',
  cut: '<path d="M1 5l15 9M1 16L17 9M1 5l9 3" stroke="#888" stroke-width="2"/><circle cx="20" cy="7" r="3" fill="none" stroke="#777" stroke-width="1.700"/><circle cx="20" cy="17" r="3" fill="none" stroke="#777" stroke-width="1.700"/>',
  copy: sheet(9, 1) + sheet(3, 5), paste: '<path d="M4 2h16v21H4z" fill="#ccc" stroke="#777"/><path d="M8 1h8v3H8z" fill="#999"/>' + sheet(6, 4).replace('v13', 'v12'),
  undo: '<path d="M1 10l8-7v4c16 0 17 12 9 16 3-6 0-10-9-9v4z" fill="#a88" stroke="#877"/>',
  redo: '<path d="M23 10l-8-7v4C-1 7-2 19 6 23c-3-6 0-10 9-9v4z" fill="#9a9" stroke="#787"/>',
  label: '<g transform="translate(1 -1)"><path d="M-1 9l4-5h19v11H3z" fill="#fcd92e" stroke="#a08000"/><text x="4" y="12.500" font-size="9" font-weight="bold" fill="#111" textLength="15">abc</text></g>',
  diagram: '<circle cx="9" cy="8" r="7.500" fill="#c81e14" stroke="#222" stroke-width=".6"/><path d="M9 8L3.500 2.500A7.500 7.500 0 0 1 15 3z" fill="#fcd92e"/><path d="M9 8L3.500 2.500A7.500 7.500 0 0 0 9 15.500z" fill="#22b04a" stroke="#222" stroke-width=".6"/><path d="M11 17h4v6h-4z" fill="#fcd92e" stroke="#d80"/><path d="M15 10h3.500v13H15z" fill="#1ab44a" stroke="#063"/><path d="M19 18h3.500v5H19z" fill="#c81e14" stroke="#600"/>',
  globe, blueDot: '<circle cx="12" cy="12" r="10" fill="#2f6ca8"/>', dbDark: '<path d="M1 1h22v20H1z" fill="#3b6a9c" stroke="#222"/>',
  selRect: ys(2, 2, 14) + '<path d="M.7 1h22.600v20H.7z" fill="none" stroke="#444" stroke-dasharray="2 1.500"/>' + cursor.replace('M13 11', 'M11 9'),
  selForm: ys(8, 7, 14) + '<path d="M1 2h15v13H1z" fill="#e4e8ea" stroke="#888" stroke-width="1.200"/><path d="M4 4h9v3H4zM4 9h9v3H4z" fill="#fff" stroke="#888"/>',
  deselect: ys(1, 1, 13) + ys(5, 5, 13) + no(12, 12), selLoc: ys(1, 1, 13) + '<path d="M19 23c-6-8-2-12 0-12s6 4 0 12z" fill="#5f8bb0" stroke="#47708f"/><circle cx="19" cy="15" r="1.500" fill="#fff"/>',
  addBox: '<path d="M2 2h17v17H2z" fill="#f5f5f5" stroke="#888" stroke-width="1.500"/><rect x="14" y="14" width="10" height="10" rx="3" fill="#4a944a"/><circle cx="19" cy="19" r="2.200" fill="#fff"/>',
  removeBox: '<path d="M2 2h17v17H2z" fill="#f5f5f5" stroke="#888" stroke-width="1.500"/><rect x="13" y="14" width="11" height="9" rx="2" fill="#e04040"/><path d="M15 18.500h7" stroke="#fff" stroke-width="2"/>',
  filter: fun, collapse: tree(1), expand: tree(0),
  brush: '<path d="M1 11l9-3 6 9-8 6z" fill="#f5d34a" stroke="#d8a030" stroke-width=".8"/><path d="M1 11l3-1 4 12z" fill="#e05a5a"/><path d="M4 10l3-1 6 10-2 1z" fill="#f2a8a0"/><path d="M9 7l5 9 4-4-4-7z" fill="#c87848"/><path d="M14 9l8-8 2 2-7 9z" fill="#e08830" stroke="#c07020" stroke-width=".8"/>',
  addGroup: '<path d="M1 7h12v14H1zM5 4h12v15H5z" fill="#eee" stroke="#777"/><path d="M13 14V3q3-4 4 0v10" stroke="#456a91" fill="none" stroke-width="1.500"/><path d="M9 5h13v12H9z" fill="none" stroke="#777"/><rect x="14" y="14" width="10" height="10" rx="3" fill="#4a944a"/><path d="M19 16v6m-3-3h6" stroke="#fff" stroke-width="2"/>',
  eye: '<path d="M1 12Q11 1 22 12Q12 20 1 12z" fill="#f4f4f4" stroke="#888"/><circle cx="11" cy="11" r="5" fill="#6d97c4"/><circle cx="11" cy="11" r="2.300" fill="#222"/><path d="M1 8Q11-1 20 7" fill="none" stroke="#999" stroke-width="1.500"/><path d="M17 19h7l-3.500 4z" fill="#555"/>',
  epsilon: '<path d="M12 4C9-1 2 1 4 5q1 2 4 2-6 0-5.500 4C3 16 10 15 12 12" fill="none" stroke="#6a3a6e" stroke-width="2.400"/><path d="M11 10h12v3l-2 1v8h-3v-6h-3v6h-3v-8l-1-1z" fill="#aaa"/>',
  float: '<rect x="1" y="1" width="22" height="22" rx="4" fill="#f0f0f0" stroke="#666" stroke-width="2"/><path d="M10 5h9v9h-9zM5 10h9v9H5z" fill="#eee" stroke="#666" stroke-width="2"/>',
  pclose: '<rect x="1" y="1" width="22" height="22" rx="4" fill="#f0f0f0" stroke="#666" stroke-width="2"/><path d="M6 6l12 12M18 6L6 18" stroke="#555" stroke-width="4"/>',
  addRow: '<path d="M1 2h20v5H1zM1 9h20v10H1zM7 9v10" fill="#ddd" stroke="#777" stroke-width="1.500"/>' + star(),
  selExpr: ys(8, 8, 14) + '<path d="M12 3C9-1 2 1 4 4q1 2 4 2-6 0-5.500 4C3 14 10 13 11 10" fill="none" stroke="#5a3a6e" stroke-width="2"/>',
  selAll: ys(1, 2, 22, 5) + ys(1, 9.5, 22, 5) + ys(1, 17, 22, 5), invert: '<path d="M2 2h20v20z" fill="#ddd" stroke="#888"/><path d="M2 2l20 20H2z" fill="#fce94f" stroke="#b89a00"/>', deselOne: ys(1, 1, 14) + no(12, 12),
  moveTop: '<path d="M1 2h22v20H1z" fill="#cfe0f2" stroke="#5b8fc4" stroke-width="1.500"/><path d="M1 2h22v4H1z" fill="#8cb4de"/><path d="M2 9h20v5H2z" fill="#fce94f"/><path d="M12 7l5 6h-3v7h-4v-7H7z" fill="#39699c"/>',
  newField: '<path d="M2 1h19v21H2zM8 1v21M2 7h6M2 13h6" fill="#ddd" stroke="#777" stroke-width="1.500"/>' + star(), delField: '<path d="M2 1h19v21H2zM8 1v21M2 7h6M2 13h6" fill="#ddd" stroke="#777" stroke-width="1.500"/>' + no(12, 12),
  editField: grid + pen(4, '#e0703a', '#8a3a1a'), cond: '<path d="M2 1h20v5H2z" fill="#eee" stroke="#999"/><path d="M2 9h20v6H2z" fill="#8cc88c" stroke="#4a944a"/><path d="M2 18h20v5H2z" fill="#fff" stroke="#999"/><path d="M5 20.500h14" stroke="#c33" stroke-width="1.500"/><path d="M9 3.500h12" stroke="#333" stroke-width="1.500"/>',
  dock: '<path d="M5 1h18v17H5z" fill="#eee" stroke="#888"/><path d="M5 1h18v4H5z" fill="#555"/><path d="M1 9h15v14H1z" fill="#e8f0f8" stroke="#8cb4de"/><path d="M1 9h15v4H1z" fill="#8cb4de"/><path d="M4 16h3m2 0h4M4 20h3m2 0h4" stroke="#5b8fc4" stroke-width="1.500"/>',
  formView: '<rect x="1" y="1" width="22" height="22" rx="1" fill="#eaf1f8" stroke="#8cb4de" stroke-width="1.500"/><path d="M3 8h5M3 16h5" stroke="#555" stroke-width="1.500"/><path d="M11 5h9v5h-9zM11 14h9v5h-9z" fill="#fff" stroke="#8cb4de" stroke-width="1.500"/>',
  star: '<path d="M12 1l3.300 7.700 8.200.8-6.200 5.400 1.900 8.100L12 18.700 4.800 23l1.900-8.100L.5 9.500l8.200-.8z" fill="#fce94f" stroke="#b89a00"/>',
  bm: '<path d="M2 1h20v20H2z" fill="#ddd" stroke="#aaa"/><path d="M7 1v20" stroke="#aaa"/><path d="M13 0h5v10l-2.500 2L13 10z" fill="#6d97c4"/>',
  projHome: folder('#b8dc5a', '#6a8a30') + '<path d="M5 20L20 9M4 10l8 8" stroke="#fff" stroke-width="1.500"/><circle cx="15" cy="12" r="4" fill="#1c8a1c"/>',
  home: folder('#f4f4f4', '#888') + '<path d="M7 14l5-5 5 5M8.500 13v6h7v-6" fill="none" stroke="#333" stroke-width="1.500"/>', dir: folder('#eee', '#888'),
  pg: '<path d="M2 5Q3 0 12 1q10-1 11 6 0 8-5 9v5q-4 3-5-1v-6l-3 1v4H7Q1 15 2 5z" fill="#6d97c4" stroke="#355d86"/><path d="M8 3q-3 6 1 10M15 2q4 6 0 12" fill="none" stroke="#39597b"/>',
  ms: '<path d="M1 1q16 1 22 8-13 3-20 13Q8 9 1 1z" fill="#6d97c4" stroke="#39597b"/><path d="M8 2q3 6 1 12M14 4q2 4 1 8" stroke="#dce8f4" fill="none"/>',
  db2: '<rect width="24" height="24" rx="3" fill="#6d97c4"/><text x="2" y="15.500" font-size="9.500" fill="#fff" textLength="20">DB2</text>',
  vt: '<path d="M1 1h22v22H1z" fill="#fff"/><path d="M2 1v22M8.700 1v22M15.300 1v22M22 1v22M1 2h22M1 8.700h22M1 15.300h22M1 22h22" stroke="#44586c" stroke-width="2"/>',
  xyz: '<path d="M1 2h6v6H1zM9 2h6v6H9zM17 2h6v6h-6zM1 10h6v6H1zM9 10h6v6H9zM17 10h6v6h-6zM1 18h6v6H1zM9 18h6v6H9zM17 18h6v6h-6z" fill="#6d97c4"/>',
  plane: '<path d="M17 1l3 1-1 3 2 1-4 6 1 2-5 3-3 3-5 3 1-5-1-3 3-2 0-3 4-3z" fill="#d4601c" stroke="#9a6a4a" stroke-width="1"/><path d="M18 3l-3 11M9 11l-3 9" stroke="#7a3a2a" stroke-width="1.600"/>',
  mem: '<path d="M4 2v4M9 2v4M14 2v4M19 2v4M4 18v4M9 18v4M14 18v4M19 18v4" stroke="#777" stroke-width="2"/><rect x="1.500" y="6" width="21" height="12" rx="1.500" fill="#f4f4f4" stroke="#777" stroke-width="2"/>',
  mouse: '<path d="M5 3l4-1 8 11q3 5-1 7-4 2-7-2L4 8z" fill="#fff" stroke="#222" stroke-width="1.500"/><path d="M6 3l7 11M10 2l3 9M4 8l6 5" stroke="#222" stroke-width="3"/><path d="M1 14l3 5M19 2q-3 3 0 7M3 20l4 2" stroke="#444" fill="none"/><circle cx="14" cy="17" r="1.500" fill="#333"/>',
  lock: '<path d="M7 11V6q0-4 5-4t5 4v5" fill="none" stroke="#777" stroke-width="2.200"/><rect x="4" y="10" width="16" height="13" rx="2" fill="#555"/>',
  crs: '<circle cx="12" cy="12" r="9" fill="#bbb" stroke="#555" stroke-width="1.200"/><path d="M12 3v18M3 12h18M5 7.500h14M5 16.500h14M8 4q-4 8 0 16M16 4q4 8 0 16" stroke="#555" fill="none"/>',
  bubble: '<path d="M12 2c15 0 14 18 5 18l3 4-8-4C-3 20-3 2 12 2z" fill="#555"/><path d="M6 11h3m2 0h3m2 0h3" stroke="#fff" stroke-width="2.500"/>'
};
const svg = n => `<svg viewBox="0 0 24 24">${icons[n]}</svg>`;

document.querySelectorAll('[data-icon]').forEach(e => { e.innerHTML = svg(e.dataset.icon); });
const fixed = {
  '|': '<i class="grip first"></i>', '|w': '<i class="grip wide"></i>', '|g': '<i class="grip mid"></i>', '|h': '<i class="grip tight"></i>',
  s: '<i class="sep"></i>', S: '<i class="sep wide"></i>', v: '<i class="arr"><b class="tri"></b></i>',
  'v~': '<i class="arr dis"><b class="tri"></b></i>', gap: '<i class="gap"></i>', gapS: '<i class="gapS"></i>'
};
document.querySelectorAll('[data-items]').forEach(bar => {
  bar.innerHTML = bar.dataset.items.split(' ').map(n => {
    if (fixed[n]) return fixed[n];
    const name = n.replace(/[~*]/, '');
    return `<i class="tb${n.endsWith('~') ? ' dis' : ''}${n.endsWith('*') ? ' on' : ''}">${svg(name)}</i>`;
  }).join('');
});

document.getElementById('browser').innerHTML = [
  ['star', 'Favorites'], ['bm', 'Spatial Bookmarks', 1], ['projHome', 'Project Home', 1], ['home', 'Home', 1], ['dir', '/', 1],
  ['geo', 'GeoPackage'], ['quill', 'SpatiaLite'], ['pg', 'PostGIS'], ['ms', 'MSSQL'], ['db2', 'DB2'], ['globe', 'WMS/WMTS'],
  ['vt', 'Vector Tiles'], ['xyz', 'XYZ Tiles', 1]
].map(([i, t, x]) => `<div class="brow"><i class="ex${x ? '' : ' no'}"></i>${svg(i)}<span>${t}</span></div>`).join('');

document.getElementById('layers').innerHTML = [
  ['military', 'pt', '#7cb45c', 1], ['airports', 'plane', ''], ['alaska', 'fill', '#e6b533'], ['builtups', 'fill', '#e15989'],
  ['evergreen', 'fill', '#a47158', 1], ['landice', 'fill', '#becf50'], ['grassland', 'fill', '#987db7'], ['lakes', 'fill', '#e77148'],
  ['majrivers', 'ln', '#dba5a8'], ['pipelines', 'ln', '#fdce8c'], ['popp', 'pt', '#e8718d'], ['Vertices', 'pt', '#91526d', 1],
  ['railroads', 'ln', '#c8b0d0'], ['Added geom info', 'ln', '#cbc0dd', 1], ['Pasted', 'fill', '#e6b533', 1], ['Buffered', 'fill', '#becf50', 1],
  ['Intersection', 'pt', '#987db7', 1], ['Intersections', 'pt', '#4b0fe0', 1], ['Intersection', 'pt', '#e15989', 1], ['Intersection', 'ln', '#e99690', 1],
  ['bristol', 'fill', '#7d8b8f', 1], ['regions', 'fill', '#f3a6b2'], ['rivers', 'ln', '#b8d2b8'], ['swamp', 'fill', '#d5b43c'],
  ['storagep', 'pt', '#a47158'], ['trails', 'ln', '#c4dcbc'], ['', 'fill', '#7d8b8f']
].map(([t, k, c, m]) => {
  const current = t === 'Vertices';
  const s = k === 'plane' ? svg('plane') : k === 'fill' ? '' : `<b style="background:${c}"></b>`;
  return `<div class="lrow${current ? ' sel' : ''}"><i class="check${current ? ' on' : ''}"></i><i class="sym ${k}"${k === 'fill' ? ` style="background:${c}"` : ''}>${s}</i><span>${current ? `<u>${t}</u>` : t}</span>${m ? `<i class="mem">${svg('mem')}</i>` : ''}</div>`;
}).join('');

const data = [
  [27, 3, '11484.616…', '161.30301…'], [27, 2, '8137.8139…', '187.69239…'], [25, 3, '16028.768…', '83.982479…'], [25, 2, '9940.4921…', '89.183811…'],
  [26, 1, '3547.7833…', '148.22704…'], [26, 0, '0', '148.22704…'], [24, 2, '5820.5295…', '148.21259…'], [24, 1, '5335.4413…', '152.80353…'],
  [25, 1, '5503.7325…', '80.950972…'], [25, 0, '0', '67.516802…'], [23, 3, '14647.184…', '151.01245…'], [23, 2, '8565.0639…', '143.12731…'],
  [24, 0, '0', '157.39448…'], [23, 4, '15013.835…', '157.32285…'], [39, 15, '90081.358…', '27.494511…'], [39, 14, '78320.878…', '42.942317…']
];
const heads = ['', 'cat', 'EXSDESC', 'F_CODE', 'F_CODEDESC', 'FCODESC', 'vertex_index', 'vertex_part', 'vertex_part_index', 'distance', 'angle'];
document.getElementById('table').innerHTML =
  `<div class="tr head">${heads.map(h => `<div>${h}</div>`).join('')}</div>` +
  `<div class="tr part alt"><div class="h"></div>${'<div></div>'.repeat(10)}</div>` +
  data.map(([c, i, d, a], n) => `<div class="tr${n % 2 ? ' alt' : ''}"><div class="h">${647 + n}</div><div class="r">${c}.000</div><div>Operational</div><div>AN010</div><div>Railroad</div><div>Single</div><div class="r">${i}</div><div class="r">0</div><div class="r">${i}</div><div class="r">${d}</div><div class="r">${a}</div></div>`).join('');

// Railroad vertices: each run is a polyline sampled at a near-regular step.
const runs = [
  '759,224 765,225 769,229 777,230 782,231 785,238', '733,222 735,221', '744,213 741,216 748,221 745,223 746,217 751,219',
  '744,215 736,215 730,213 727,207 722,206 714,207 708,215 704,221 695,228 683,232 677,234 673,241 668,247 660,257 661,272',
  '663,285 663,280', '659,297 661,301 659,307 654,309 653,315', '657,324 659,329 661,333', '665,340 663,347 665,352',
  '676,366 682,366', '670,357 676,366 674,370 679,382 685,393 688,399 686,407 688,415 687,423 684,429 677,436 667,447 663,457 658,464 652,469 642,487 640,497 638,503 645,508 642,518 638,530 629,540 621,550 615,562 613,577 612,587 615,593',
  '616,604 619,617 620,630 625,643 623,649', '622,658 623,672 632,688 646,698 662,700 668,698 680,702 687,700', '683,707 681,714 667,722 660,732 656,743 652,743 643,752',
  '638,760 642,770 652,782 668,786 681,793 692,789 703,799 708,808', '726,812 724,811 716,810 708,808', '708,805 707,817 703,823 706,830 699,845',
  '692,847 685,851 684,863 687,880 687,893 683,909', '1721,809 1718,810', '1711,827 1714,813 1718,807 1717,800 1719,784'
];
let seed = 7;
const rnd = () => (seed = seed * 16807 % 2147483647) / 2147483647;
let dots = '';
runs.forEach((run, k) => {
  const p = run.split(' ').map(s => s.split(',').map(Number));
  const step = k > 16 ? 1.6 : 2.8;
  for (let j = 0; j < p.length - 1; j++) {
    const [x1, y1] = p[j], [x2, y2] = p[j + 1], n = Math.max(1, Math.round(Math.hypot(x2 - x1, y2 - y1) / step));
    for (let q = 0; q < n; q++) {
      const t = (q + rnd() * .8) / n;
      dots += `<circle cx="${(x1 + (x2 - x1) * t + (rnd() - .5) * 1.6 + .5).toFixed(1)}" cy="${(y1 + (y2 - y1) * t + .5).toFixed(1)}" r="3.700"/>`;
    }
  }
  const e = p[p.length - 1];
  dots += `<circle cx="${e[0] + .5}" cy="${e[1] + .5}" r="3.700"/>`;
});
document.getElementById('map').innerHTML = `<g fill="#b8474c" stroke="#352b2b" stroke-width="1">${dots}</g>`;

const cal = (c, inner) => `<path d="M8 2h20l14 14v26q0 4-4 4H10q-4 0-4-4V6q0-4 4-4z" fill="${c}"/><path d="M11 4h18l10 12v24q0 3-3 3H12q-3 0-3-3V7q0-3 2-3z" fill="#fafafa"/><path d="M33 2h9v9z" fill="${c}"/>${inner}`;
const apps = [
  [1, '<defs><linearGradient id="fx" x1=".8" y1="0" x2=".3" y2="1"><stop offset="0" stop-color="#fff44f"/><stop offset=".4" stop-color="#ff980e"/><stop offset=".75" stop-color="#ff3750"/><stop offset="1" stop-color="#e3118a"/></linearGradient></defs><path d="M30 1c3 5 9 7 13 13 9 16-2 33-19 33S-4 31 4 14l5-6 1 5 5-3 2 5 6-4c0-4 2-8 7-10z" fill="url(#fx)"/><circle cx="24" cy="26" r="10" fill="#7a3fe0"/><path d="M9 17c6-4 12-1 15 2-3 0-5 3-8 4s-4 6 0 10C8 31 5 23 9 17z" fill="#ff8a16"/>'],
  [0, '<rect x="6" y="2" width="36" height="45" rx="4" fill="#dcd8cf"/><circle cx="24" cy="25" r="16" fill="#222"/><circle cx="24" cy="25" r="13.500" fill="#f0b81c"/><circle cx="24" cy="25" r="6" fill="#1a1a1a"/>'],
  [1, '<rect x="2" y="2" width="44" height="44" rx="4" fill="#9d9684"/><path d="M9 13q0-3 3-3h9l3 3h12q3 0 3 3v6H9z" fill="#dcd8cf"/><rect x="8" y="14" width="32" height="24" rx="3" fill="#fafafa"/>'],
  [0, cal('#1e7ab4', '<path d="M12 19h8m-8 4h8m-8 4h8m-8 4h24m-24 4h24m-24 4h18" stroke="#1e7ab4" stroke-width="2"/><path d="M22 17h14v10H22z" fill="#6aaede"/><path d="M23 27l5-7 3 4 2-2 3 5z" fill="#333"/>')],
  [0, '<g transform="translate(0 -1.500)"><path d="M17 9q7-13 14 0" fill="none" stroke="#e8d4c0" stroke-width="2"/><rect x="2" y="8" width="44" height="37" rx="4" fill="#f0652e"/><path d="M14 38L22 15h4l8 23" fill="none" stroke="#fff" stroke-width="4.500"/><rect x="10" y="28" width="28" height="4" rx="2" fill="#fff"/></g>'],
  [0, '<rect x="1" y="1" width="46" height="46" rx="4" fill="#1c7ed8"/><rect x="4" y="4" width="40" height="40" fill="#fff"/><rect x="8" y="8" width="32" height="32" fill="#2e9cf4"/><path d="M8 20h4l5 15 6-22 5 15 4-14 5 14h4" fill="none" stroke="#fff" stroke-width="2.500"/>'],
  [0, '<g transform="translate(0 2.500)"><circle cx="25" cy="8" r="6.500" fill="#7b83eb"/><circle cx="38" cy="10" r="4.500" fill="#5059c9"/><path d="M32 17h13v14q-4 7-13 3z" fill="#5059c9"/><path d="M16 17h20v15c-2 13-18 11-20 1z" fill="#7b83eb"/><rect x="3" y="10" width="21" height="22" rx="2" fill="#464eb8"/><path d="M9 16h9M13.500 16v11" stroke="#fff" stroke-width="2.500"/><path d="M14 45L48 24v10L34 45z" fill="#b48ae8"/><text transform="translate(27 44) rotate(-31)" font-size="5.500" font-weight="bold" fill="#fff" textLength="22" lengthAdjust="spacingAndGlyphs">PREVIEW</text></g>'],
  [1, '<circle cx="24" cy="24" r="22.500" fill="#1ed760"/><path d="M10 16q15-4 29 3M11 24q13-4 25 3M13 31q11-3 20 2.500" fill="none" stroke="#191414" stroke-width="3.500" stroke-linecap="round"/>'],
  [0, '<path d="M0 8L18 0l12 20-16 16z" fill="#e8176c"/><path d="M30 1l18 38-14 8-16-10z" fill="#1a80f8"/><path d="M26 24l22-5-10 16z" fill="#c0286c"/><path d="M4 32l8-22 18 28-10 10-14-6z" fill="#fc9a1c"/><rect x="9" y="9" width="30" height="30" fill="#111"/><text x="11" y="25" font-size="17" font-weight="bold" fill="#fff" textLength="25" lengthAdjust="spacingAndGlyphs">RD</text><path d="M12 34h11" stroke="#fff" stroke-width="2"/>'],
  [2, '<circle cx="24" cy="24" r="17.500" fill="none" stroke="#7fa32c" stroke-width="10"/><path d="M24 27l6-6 17 17v9h-6z" fill="#5fa042" stroke="#4d3b50" stroke-width="1.200"/><path d="M20 20h9l-1 8-5 2z" fill="#f08423"/><path d="M28 25l5 2-4 6-5-4z" fill="#f4e94a"/>'],
  [1, '<rect x="2" y="6" width="44" height="36" rx="4" fill="#4a4a4a" stroke="#777"/><path d="M8 11l6 3-6 3M16 20h7" fill="none" stroke="#fff" stroke-width="1.800"/>'],
  [1, cal('#2f9a22', '<path d="M13 18h22v20H13z" fill="#bfeeb0"/><path d="M13 18h22v20H13zM13 23h22M13 28h22M13 33h22M20 18v20M28 18v20" fill="none" stroke="#168a10" stroke-width="1.500"/><path d="M26 29h11v10H26z" fill="#fff" stroke="#888"/><path d="M28 34h2.500v5H28z" fill="#28c"/><path d="M31 31h2.500v8H31z" fill="#e62"/><path d="M34 36h2.500v3H34z" fill="#eb3"/>')]
];
document.getElementById('dock').innerHTML = apps.map(([n, g]) => `<div class="cell${n === 2 ? ' active' : ''}"><div class="dots">${'<b></b>'.repeat(n)}</div><svg viewBox="0 0 48 48">${g}</svg></div>`).join('') +
  `<div class="apps"><svg viewBox="0 0 30 30" fill="#f2f2f2">${[0, 12, 24].map(y => [0, 12, 24].map(x => `<rect x="${x}" y="${y}" width="6" height="6" rx="1.500"/>`).join('')).join('')}</svg></div>`;
```
